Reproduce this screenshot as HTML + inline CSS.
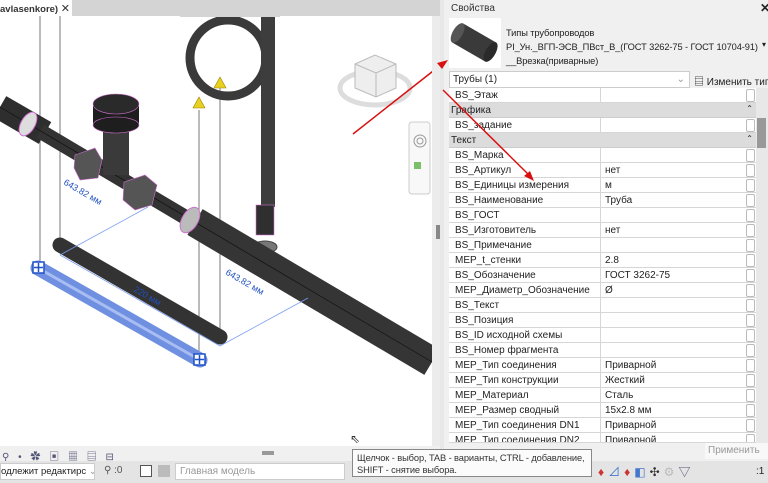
<!DOCTYPE html>
<html><head><meta charset="utf-8"><style>
*{margin:0;padding:0;box-sizing:border-box}
body{width:768px;height:483px;overflow:hidden;background:#f0f0f0;font-family:"Liberation Sans","Noto Sans CJK SC",sans-serif;font-size:10px;color:#222;position:relative}
.abs{position:absolute;white-space:nowrap}
.row{position:absolute;left:449px;width:307px;height:15px;border-bottom:1px solid #d6d6d6;background:#fff;white-space:nowrap}
.row .k{position:absolute;left:6px;top:2px}
.row .v{position:absolute;left:151px;top:0;height:15px;border-left:1px solid #d6d6d6;padding-left:4px;padding-top:2px;width:146px}
.row .c{position:absolute;left:297px;top:1px;width:9px;height:13px;border:1px solid #bbb;border-radius:2px;background:#fff}
.grp{background:#dcdcdc;border-bottom:1px solid #ccc}
</style></head><body>
<div class="abs" style="left:0;top:0;width:432px;height:446px;background:#fff"></div>
<div class="abs" style="left:0;top:0;width:440px;height:16px;background:#d4d4d4"></div>
<div class="abs" style="left:0;top:0;width:72px;height:16px;background:#fff;font-size:9.5px;padding:2px 0 0 0;font-weight:bold;color:#333;overflow:hidden">avlasenkore) <span style="font-weight:normal;font-size:11px">✕</span></div>
<div class="abs" style="left:432px;top:16px;width:8px;height:430px;background:#ececec"></div>
<div class="abs" style="left:436px;top:225px;width:4px;height:14px;background:#888"></div>
<svg class="abs" style="left:0;top:0" width="432" height="446">
<g stroke="#777" stroke-width="1">
<line x1="40" y1="16" x2="40" y2="268"/><line x1="60" y1="16" x2="60" y2="250"/>
<line x1="199" y1="110" x2="199" y2="358"/><line x1="220" y1="88" x2="220" y2="340"/>
</g>
<circle cx="228" cy="58" r="38" fill="none" stroke="#3a3a3a" stroke-width="9"/>
<rect x="180" y="0" width="100" height="17" fill="#d4d4d4"/>
<rect x="261" y="17" width="14" height="190" fill="#3d3d3d"/>
<rect x="256" y="205" width="18" height="30" fill="#2f2f2f" stroke="#d070d0" stroke-width="0.6"/>
<ellipse cx="265" cy="247" rx="12" ry="6" fill="#777" stroke="#444"/>
<line x1="0" y1="107" x2="45" y2="133" stroke="#2e2e2e" stroke-width="25"/>
<line x1="40" y1="131" x2="200" y2="226" stroke="#333" stroke-width="15"/>
<line x1="195" y1="222" x2="432" y2="362" stroke="#353535" stroke-width="30"/>
<line x1="0" y1="107" x2="432" y2="362" stroke="#111" stroke-width="0.7"/>
<ellipse cx="28" cy="124" rx="7" ry="13" fill="#ddd" stroke="#d070d0" transform="rotate(30 28 124)"/>
<ellipse cx="190" cy="220" rx="8" ry="14" fill="#bbb" stroke="#d070d0" transform="rotate(30 190 220)"/>
<rect x="103" y="120" width="26" height="55" fill="#3a3a3a"/>
<rect x="93" y="103" width="46" height="22" fill="#1e1e1e"/>
<ellipse cx="116" cy="125" rx="23" ry="8" fill="#1e1e1e" stroke="#d070d0" stroke-width="0.6"/>
<ellipse cx="116" cy="104" rx="23" ry="10" fill="#2a2a2a" stroke="#d070d0" stroke-width="0.6"/>
<polygon points="75,155 95,148 102,160 98,178 80,180 74,168" fill="#555" stroke="#d070d0" stroke-width="0.6"/>
<polygon points="124,182 145,175 157,185 152,205 135,210 123,200" fill="#555" stroke="#d070d0" stroke-width="0.6"/>
<line x1="60" y1="245" x2="220" y2="337" stroke="#333" stroke-width="15" stroke-linecap="round"/>
<line x1="38" y1="268" x2="200" y2="360" stroke="#6f8fe0" stroke-width="15" stroke-linecap="round"/>
<line x1="38" y1="268" x2="200" y2="360" stroke="#a8bdf2" stroke-width="3"/>
<rect x="33" y="262" width="11" height="11" fill="#fff" stroke="#1e50c8" stroke-width="1.5"/>
<rect x="194" y="354" width="11" height="11" fill="#fff" stroke="#1e50c8" stroke-width="1.5"/>
<path d="M38.5 263v9M34 267.5h9M199.5 355v9M195 359.5h9" stroke="#1e50c8" stroke-width="1.5"/>
<g stroke="#7a9cf0" stroke-width="0.8" fill="none">
<line x1="60" y1="255" x2="148" y2="207"/><line x1="220" y1="346" x2="308" y2="298"/><line x1="60" y1="255" x2="220" y2="346"/>
</g>
<g fill="#2050c0" font-size="9">
<text x="63" y="184" transform="rotate(30 63 184)">643.82 мм</text>
<text x="225" y="274" transform="rotate(30 225 274)">643.82 мм</text>
<text x="133" y="291" transform="rotate(30 133 291)">220 мм</text>
</g>
<polygon points="199,97 193,108 205,108" fill="#e8d020" stroke="#a08000" stroke-width="0.6"/>
<polygon points="220,77 214,88 226,88" fill="#e8d020" stroke="#a08000" stroke-width="0.6"/>
<ellipse cx="375" cy="88" rx="35" ry="17" fill="none" stroke="#ddd" stroke-width="5"/>
<polygon points="355,64 375,55 396,64 396,88 376,97 355,88" fill="#eee" stroke="#bbb"/>
<path d="M355 64L376 73 396 64M376 73V97" stroke="#bbb" fill="none"/>
<rect x="409" y="122" width="21" height="72" rx="3" fill="#f8f8f8" stroke="#ccc"/>
<circle cx="420" cy="141" r="6" fill="none" stroke="#999"/><circle cx="420" cy="141" r="3" fill="none" stroke="#999"/>
<rect x="414" y="162" width="7" height="7" fill="#7bbf6a"/>
<line x1="353" y1="134" x2="442" y2="64" stroke="#d81010" stroke-width="1.5"/>
</svg>
<div class="abs" style="left:0;top:446px;width:440px;height:15px;background:#f0f0f0"></div>
<div class="abs" style="left:2px;top:448px;font-size:10px;color:#557;letter-spacing:3px">⚲ • ✿ ▣ ▦ ▤ ⊟</div>
<div class="abs" style="left:262px;top:451px;width:12px;height:4px;background:#999"></div>
<div class="abs" style="left:0;top:461px;width:768px;height:22px;background:#e4e4e4"></div>
<div class="abs" style="left:0;top:463px;width:95px;height:17px;background:#fff;border:1px solid #ccc;padding:2px 0 0 0;font-size:9.5px;overflow:hidden">одлежит редактирс <span style="color:#999">⌄</span></div>
<div class="abs" style="left:104px;top:465px;font-size:10px;color:#555">⚲ :0</div>
<div class="abs" style="left:140px;top:465px;width:12px;height:12px;border:1px solid #555;background:#fff"></div>
<div class="abs" style="left:158px;top:465px;width:12px;height:12px;background:#bbb"></div>
<div class="abs" style="left:175px;top:463px;width:170px;height:17px;background:#fff;border:1px solid #ccc;padding:2px 4px;color:#999">Главная модель</div>
<div class="abs" style="left:598px;top:463px;font-size:12px;letter-spacing:4px;color:#c33">♦<span style="color:#47c">⊿</span>♦<span style="color:#47c">◧</span><span style="color:#333">✣</span><span style="color:#bbb">⚙</span><span style="color:#557">▽</span></div>
<div class="abs" style="left:756px;top:466px;font-size:10px">:1</div>
<div class="abs" style="left:440px;top:0;width:4px;height:461px;background:#e8e8e8"></div>
<div class="abs" style="left:444px;top:0;width:324px;height:461px;background:#f0f0f0"></div>
<div class="abs" style="left:451px;top:3px;font-size:10px;color:#333">Свойства</div>
<div class="abs" style="left:760px;top:1px;font-size:12px;font-weight:bold">✕</div>
<div class="abs" style="left:449px;top:18px;width:52px;height:50px;background:#fff"></div>
<svg class="abs" style="left:449px;top:18px" width="52" height="50"><g transform="rotate(30 26 25)"><rect x="6" y="14" width="38" height="22" fill="#3a3a3a"/><ellipse cx="6" cy="25" rx="5" ry="11" fill="#555"/><ellipse cx="44" cy="25" rx="5" ry="11" fill="#2a2a2a"/></g></svg>
<div class="abs" style="left:506px;top:26px;font-size:9.3px;line-height:14px;color:#222;letter-spacing:-0.1px">Типы трубопроводов<br>PI_Ун._ВГП-ЭСВ_ПВст_В_(ГОСТ 3262-75 - ГОСТ 10704-91)<br>__Врезка(приварные)</div>
<div class="abs" style="left:762px;top:40px;font-size:8px">▾</div>
<div class="abs" style="left:449px;top:71px;width:241px;height:17px;background:#fff;border:1px solid #ccc;padding:2px 3px">Трубы (1)<span style="position:absolute;right:4px;color:#999">⌄</span></div>
<div class="abs" style="left:694px;top:73px;font-size:10px;white-space:nowrap">▤ Изменить тип</div>
<div class="abs" style="left:756px;top:88px;width:12px;height:355px;background:#e8e8e8"></div>
<div class="abs" style="left:757px;top:118px;width:9px;height:30px;background:#999"></div>
<div class="abs" style="left:449px;top:88px;width:307px;height:355px;background:#fff"></div>
<div class="row" style="top:88px"><span class="k">BS_Этаж</span><span class="v"></span><span class="c"></span></div>
<div class="row grp" style="top:103px"><span class="k" style="left:2px">Графика</span><span style="position:absolute;right:3px;top:1px;font-size:8px">⌃</span></div>
<div class="row" style="top:118px"><span class="k">BS_задание</span><span class="v"></span><span class="c"></span></div>
<div class="row grp" style="top:133px"><span class="k" style="left:2px">Текст</span><span style="position:absolute;right:3px;top:1px;font-size:8px">⌃</span></div>
<div class="row" style="top:148px"><span class="k">BS_Марка</span><span class="v"></span><span class="c"></span></div>
<div class="row" style="top:163px"><span class="k">BS_Артикул</span><span class="v">нет</span><span class="c"></span></div>
<div class="row" style="top:178px"><span class="k">BS_Единицы измерения</span><span class="v">м</span><span class="c"></span></div>
<div class="row" style="top:193px"><span class="k">BS_Наименование</span><span class="v">Труба</span><span class="c"></span></div>
<div class="row" style="top:208px"><span class="k">BS_ГОСТ</span><span class="v"></span><span class="c"></span></div>
<div class="row" style="top:223px"><span class="k">BS_Изготовитель</span><span class="v">нет</span><span class="c"></span></div>
<div class="row" style="top:238px"><span class="k">BS_Примечание</span><span class="v"></span><span class="c"></span></div>
<div class="row" style="top:253px"><span class="k">MEP_t_стенки</span><span class="v">2.8</span><span class="c"></span></div>
<div class="row" style="top:268px"><span class="k">BS_Обозначение</span><span class="v">ГОСТ 3262-75</span><span class="c"></span></div>
<div class="row" style="top:283px"><span class="k">MEP_Диаметр_Обозначение</span><span class="v">Ø</span><span class="c"></span></div>
<div class="row" style="top:298px"><span class="k">BS_Текст</span><span class="v"></span><span class="c"></span></div>
<div class="row" style="top:313px"><span class="k">BS_Позиция</span><span class="v"></span><span class="c"></span></div>
<div class="row" style="top:328px"><span class="k">BS_ID исходной схемы</span><span class="v"></span><span class="c"></span></div>
<div class="row" style="top:343px"><span class="k">BS_Номер фрагмента</span><span class="v"></span><span class="c"></span></div>
<div class="row" style="top:358px"><span class="k">MEP_Тип соединения</span><span class="v">Приварной</span><span class="c"></span></div>
<div class="row" style="top:373px"><span class="k">MEP_Тип конструкции</span><span class="v">Жесткий</span><span class="c"></span></div>
<div class="row" style="top:388px"><span class="k">MEP_Материал</span><span class="v">Сталь</span><span class="c"></span></div>
<div class="row" style="top:403px"><span class="k">MEP_Размер сводный</span><span class="v">15x2.8 мм</span><span class="c"></span></div>
<div class="row" style="top:418px"><span class="k">MEP_Тип соединения DN1</span><span class="v">Приварной</span><span class="c"></span></div>
<div class="row" style="top:433px;height:10px;overflow:hidden"><span class="k">MEP_Тип соединения DN2</span><span class="v">Приварной</span><span class="c"></span></div>
<div class="abs" style="left:705px;top:443px;width:63px;height:16px;background:#f8f8f8;color:#999;padding:2px 3px">Применить</div>
<svg class="abs" style="left:0;top:0" width="768" height="483"><line x1="443" y1="90" x2="530" y2="176" stroke="#d81010" stroke-width="1.5"/><polygon points="534,181 524,176 530,171" fill="#d81010"/><polygon points="448,60 437,63 442,69" fill="#d81010"/></svg>
<div class="abs" style="left:352px;top:449px;width:240px;height:28px;background:#fbfbfb;border:1px solid #888;padding:2px 4px;font-size:9.3px;line-height:12px;color:#333;letter-spacing:-0.1px;overflow:hidden">Щелчок - выбор, TAB - варианты, CTRL - добавление,<br>SHIFT - снятие выбора.</div>
<div class="abs" style="left:350px;top:432px;font-size:12px;color:#333">⇖</div>
</body></html>
